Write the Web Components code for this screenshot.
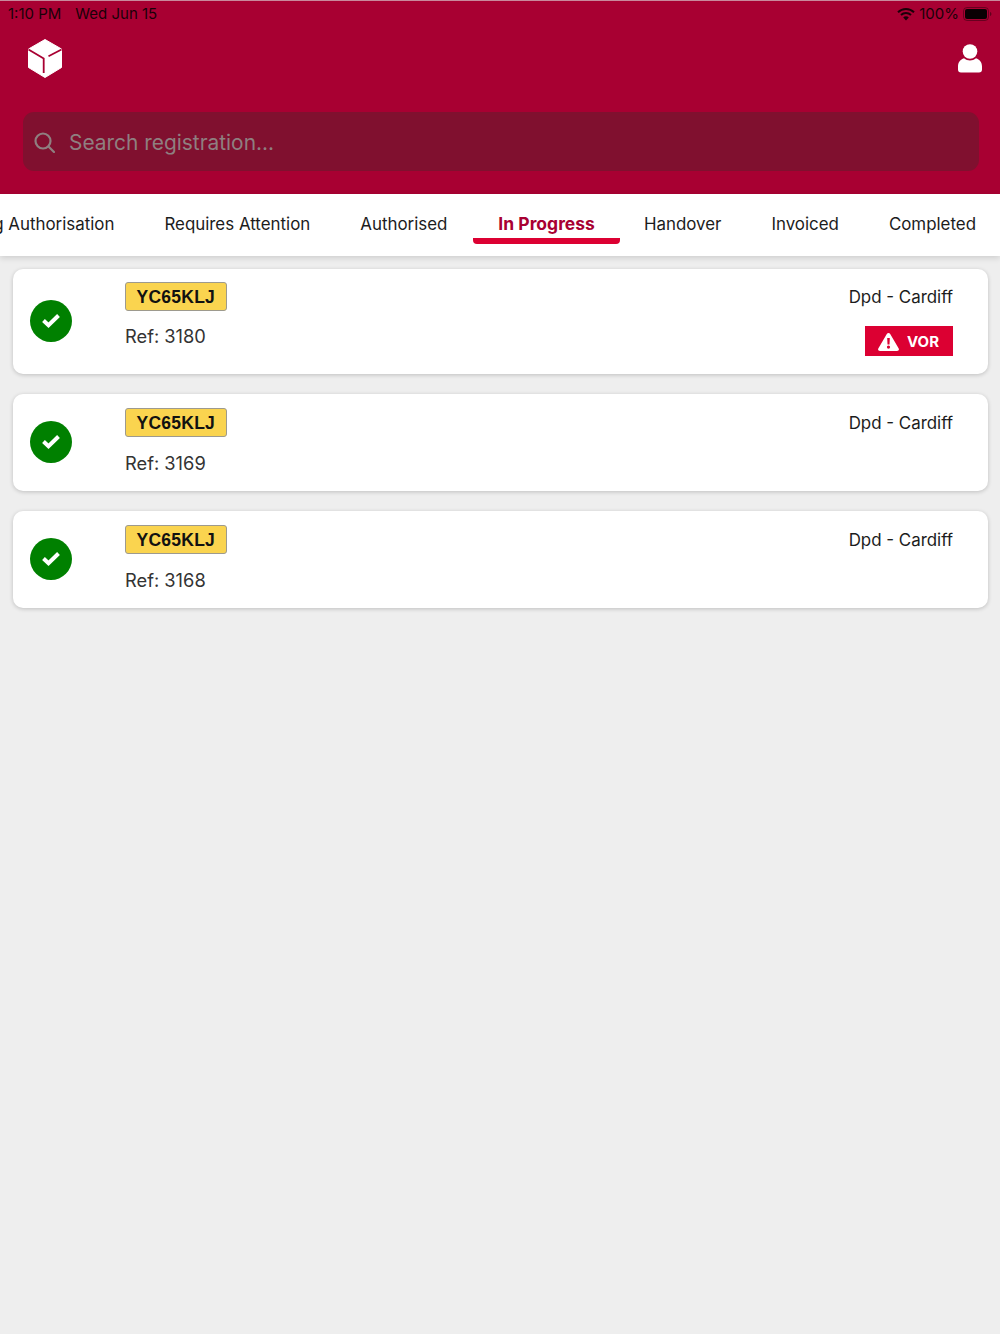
<!DOCTYPE html>
<html>
<head>
<meta charset="utf-8">
<style>
  html, body { margin: 0; height: 100%; }
  body { background: #eeeeee; font-family: Inter, "Liberation Sans", sans-serif; color: #1c1c1c; }
</style>
</head>
<body>
<app-header></app-header>
<tab-bar active="In Progress"></tab-bar>
<job-list>
  <job-card plate="YC65KLJ" ref="3180" depot="Dpd - Cardiff" vor></job-card>
  <job-card plate="YC65KLJ" ref="3169" depot="Dpd - Cardiff"></job-card>
  <job-card plate="YC65KLJ" ref="3168" depot="Dpd - Cardiff"></job-card>
</job-list>

<script>
class AppHeader extends HTMLElement {
  connectedCallback() {
    this.attachShadow({ mode: 'open' });
    this.shadowRoot.innerHTML = `
      <style>
        :host {
          display: block;
          height: 194px;
          box-sizing: border-box;
          background: #a80032;
          border-top: 1px solid #c9899c;
        }
        .status {
          display: flex;
          justify-content: space-between;
          align-items: center;
          height: 25px;
          padding: 0 8px;
          font-size: 15px;
          color: #1a0008;
        }
        .status .left { display: flex; gap: 14px; }
        .status .right { display: flex; align-items: center; gap: 4px; }
        .battery { display: block; }
        .icons {
          display: flex;
          justify-content: space-between;
          align-items: flex-start;
          padding: 13px 18px 0 28px;
          height: 86px;
          box-sizing: border-box;
        }
        .user { margin-top: 5px; }
        .search {
          display: flex;
          align-items: center;
          gap: 14px;
          height: 59px;
          box-sizing: border-box;
          margin: 0 21px 0 23px;
          padding: 2px 0 0 11px;
          border-radius: 11px;
          background: #80102f;
          color: #8f7f80;
          font-size: 20.900px;
        }
      </style>
      <div class="status">
        <div class="left"><span>1:10 PM</span><span>Wed Jun 15</span></div>
        <div class="right">
          <svg width="18" height="14" viewBox="0 0 18 14">
            <path d="M1 5.200a11.500 11.500 0 0 1 16 0" fill="none" stroke="#1a0008" stroke-width="2"/>
            <path d="M4 8.100a7.300 7.300 0 0 1 10 0" fill="none" stroke="#1a0008" stroke-width="2"/>
            <path d="M6.200 10.600a3.600 3.600 0 0 1 5.600 0L9 13.600z" fill="#1a0008"/>
          </svg>
          <span>100%</span>
          <svg class="battery" width="29" height="14" viewBox="0 0 29 14">
            <rect x=".5" y=".5" width="25" height="13" rx="3.500" fill="none" stroke="#1a0008" stroke-opacity=".45"/>
            <rect x="2" y="2" width="22" height="10" rx="2" fill="#0a0003"/>
            <path d="M27 5v4c.9-.3 1.400-1.100 1.400-2s-.5-1.700-1.400-2z" fill="#1a0008" fill-opacity=".5"/>
          </svg>
        </div>
      </div>
      <div class="icons">
        <svg width="34" height="39" viewBox="0 0 34 39">
          <path d="M17 .5L33.500 10V28.500L17 38.500L.5 28.500V10Z" fill="#fff" stroke="#fff" stroke-linejoin="round"/>
          <path d="M.5 10.500L15.700 19.500V34" fill="none" stroke="#a80032" stroke-width="1.800"/>
          <path d="M20.500 17.200L33.500 10.500" fill="none" stroke="#a80032" stroke-width="1.800"/>
        </svg>
        <svg class="user" width="24" height="29" viewBox="0 0 24 29">
          <circle cx="12" cy="7.500" r="7.300" fill="#fff"/>
          <path d="M6 14.300C8 16 9.800 16.500 12 16.500s4-.5 6-2.200c3.600 1 6 4.200 6 8.200v3a3 3 0 0 1-3 3H3a3 3 0 0 1-3-3v-3c0-4 2.400-7.200 6-8.200z" fill="#fff"/>
        </svg>
      </div>
      <div class="search">
        <svg width="21" height="21" viewBox="0 0 21 21">
          <circle cx="9" cy="9" r="7.500" fill="none" stroke="#8f7f80" stroke-width="2.200"/>
          <path d="M14.500 14.500L20 20" stroke="#8f7f80" stroke-width="2.200" stroke-linecap="round"/>
        </svg>
        <span>Search registration...</span>
      </div>
    `;
  }
}

class TabBar extends HTMLElement {
  connectedCallback() {
    const tabs = ['Awaiting Authorisation', 'Requires Attention', 'Authorised', 'In Progress', 'Handover', 'Invoiced', 'Completed'];
    const active = this.getAttribute('active');
    this.attachShadow({ mode: 'open' });
    this.shadowRoot.innerHTML = `
      <style>
        :host {
          display: flex;
          justify-content: flex-end;
          overflow: hidden;
          height: 62px;
          background: #fff;
          box-shadow: 0 2px 6px rgba(0, 0, 0, 0.14);
          position: relative;
        }
        .tab {
          flex: none;
          padding: 19px 25px 0;
          height: 50px;
          font-size: 16.900px;
          line-height: 22px;
          color: #1c1c1c;
          white-space: nowrap;
          box-sizing: border-box;
          border-bottom: 6px solid transparent;
          border-radius: 4px;
        }
        .tab:last-child { padding-right: 24px; }
        .tab.active {
          margin: 0 -1px 0 1px;
          color: #a80032;
          font-size: 17.500px;
          font-weight: 700;
          border-bottom-color: #dc0032;
        }
      </style>
      ${tabs.map(t => `<div class="tab${t === active ? ' active' : ''}">${t}</div>`).join('')}
    `;
  }
}

class JobList extends HTMLElement {
  connectedCallback() {
    this.attachShadow({ mode: 'open' });
    this.shadowRoot.innerHTML = `
      <style>
        :host {
          display: flex;
          flex-direction: column;
          gap: 19.500px;
          padding: 13px 12px 0 13px;
        }
      </style>
      <slot></slot>
    `;
  }
}

class JobCard extends HTMLElement {
  connectedCallback() {
    const vor = this.hasAttribute('vor');
    this.attachShadow({ mode: 'open' });
    this.shadowRoot.innerHTML = `
      <style>
        :host {
          display: flex;
          align-items: flex-start;
          background: #fff;
          border-radius: 10px;
          box-shadow: 0 1px 4px rgba(0, 0, 0, 0.2);
          padding: 14px 35px 15px 17px;
          height: 97.600px;
          box-sizing: border-box;
        }
        :host([vor]) {
          padding-top: 13px;
          height: 105px;
        }
        :host([vor]) .ref { margin-top: 13px; }
        .check {
          flex: none;
          width: 42px;
          height: 42px;
          margin: auto 53px auto 0;
          border-radius: 50%;
          background: #008000;
          display: flex;
          align-items: center;
          justify-content: center;
        }
        .main { flex: 1; }
        .plate {
          display: inline-block;
          height: 29px;
          line-height: 28px;
          padding: 0 10.500px;
          box-sizing: border-box;
          background: #fad44f;
          border: 1px solid #9d9a8e;
          border-radius: 3px;
          color: #111;
          font-size: 17.500px;
          font-weight: 700;
          letter-spacing: 0.25px;
          font-family: "Liberation Sans", Arial, sans-serif;
        }
        .ref {
          margin-top: 14px;
          font-size: 18.300px;
          line-height: 24px;
          color: #333;
        }
        .side {
          display: flex;
          flex-direction: column;
          align-items: flex-end;
        }
        .depot {
          height: 29px;
          line-height: 30px;
          font-size: 16.900px;
          color: #1c1c1c;
        }
        .vor {
          display: flex;
          align-items: center;
          gap: 8px;
          height: 30px;
          box-sizing: border-box;
          margin-top: 15px;
          padding: 1px 14px 0 13px;
          background: #dc0032;
          color: #fff;
          font-size: 15px;
          font-weight: 700;
        }
      </style>
      <div class="check">
        <svg width="20" height="15" viewBox="0 0 20 15">
          <path d="M2.500 7.500L7.500 12.200L17.500 2.500" fill="none" stroke="#fff" stroke-width="4"/>
        </svg>
      </div>
      <div class="main">
        <div class="plate">${this.getAttribute('plate')}</div>
        <div class="ref">Ref: ${this.getAttribute('ref')}</div>
      </div>
      <div class="side">
        <div class="depot">${this.getAttribute('depot')}</div>
        ${vor ? `<div class="vor">
          <svg width="21" height="18" viewBox="0 0 21 18">
            <path fill-rule="evenodd" fill="#fff" d="M10.500 0c.7 0 1.300.4 1.700 1l8.500 14.500c.7 1.200-.2 2.500-1.700 2.500H2c-1.500 0-2.400-1.300-1.700-2.500L8.800 1c.4-.6 1-1 1.700-1zM9.200 5l.3 6.500h2l.3-6.500zM10.500 12.500a1.600 1.600 0 1 0 0 3.200 1.600 1.600 0 0 0 0-3.200z"/>
          </svg>
          <span>VOR</span>
        </div>` : ''}
      </div>
    `;
  }
}

customElements.define('app-header', AppHeader);
customElements.define('tab-bar', TabBar);
customElements.define('job-list', JobList);
customElements.define('job-card', JobCard);
</script>
</body>
</html>
